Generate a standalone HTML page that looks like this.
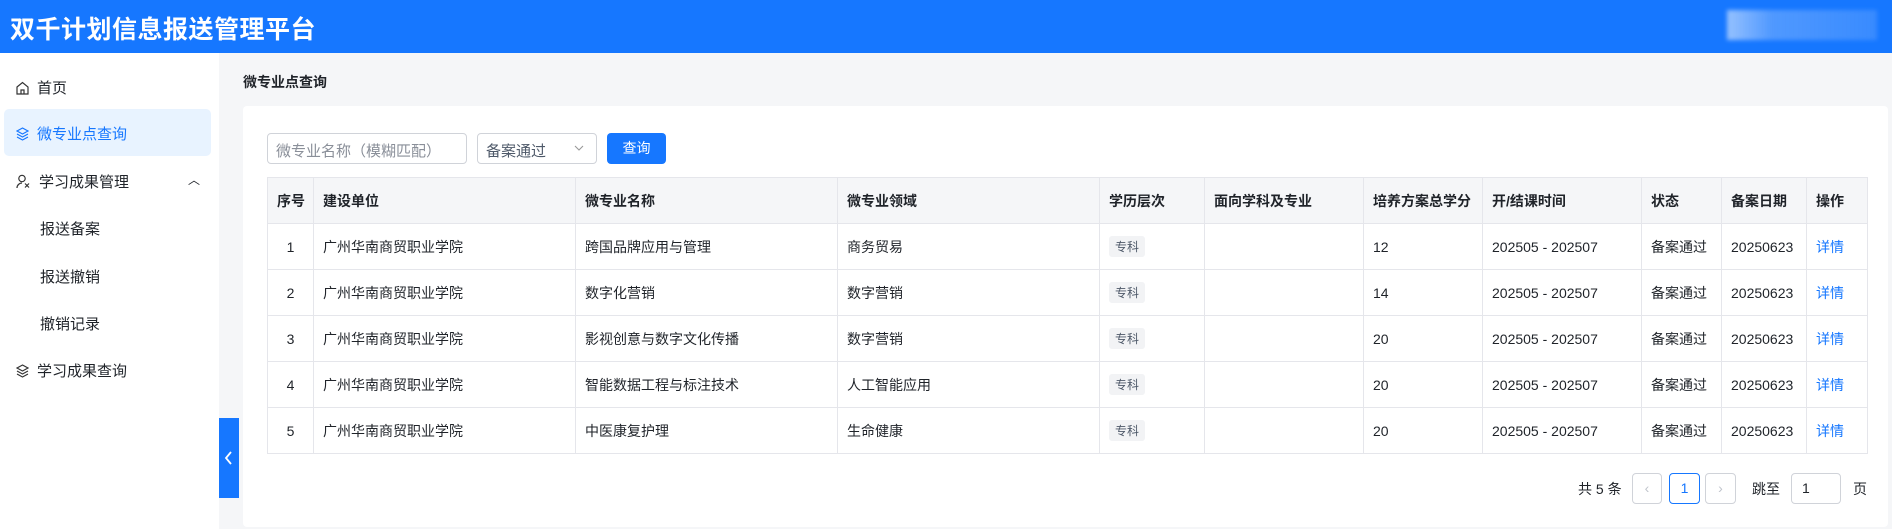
<!DOCTYPE html>
<html><head><meta charset="utf-8"><style>
*{box-sizing:border-box;margin:0;padding:0}
body{width:1892px;height:529px;overflow:hidden;background:#f5f6f8;font-family:"Liberation Sans","Noto Sans CJK SC",sans-serif;color:#1f2329;position:relative}
.hd{position:absolute;left:0;top:0;width:1892px;height:53px;background:#1677ff}
.hd h1{position:absolute;left:10px;top:10px;font-size:25px;color:#fff;font-weight:bold;letter-spacing:0.5px}
.blur{position:absolute;left:1727px;top:10px;width:150px;height:30px;background:linear-gradient(90deg,rgba(255,255,255,.55),rgba(255,255,255,.25) 30%,rgba(255,255,255,.15));filter:blur(2px)}
.sb{position:absolute;left:0;top:53px;width:219px;height:476px;background:#fff}
.mi{position:absolute;left:0;font-size:15px;color:#1f2329;display:flex;align-items:center}
.mi svg{margin-right:8px}
.act{position:absolute;left:4px;top:109px;width:207px;height:47px;background:#e8f3ff;border-radius:5px}
.col{position:absolute;left:219px;top:418px;width:20px;height:80px;background:#1677ff}
.bc{position:absolute;left:243px;top:72px;font-size:14px;font-weight:bold}
.card{position:absolute;left:243px;top:106px;width:1645px;height:421px;background:#fff;border-radius:4px}
.inp{position:absolute;top:133px;height:31px;border:1px solid #d0d3d9;border-radius:4px;font-size:15px;color:#8a8f99;padding:6px 8px}
.btn{position:absolute;left:607px;top:133px;width:59px;height:31px;background:#1677ff;border-radius:4px;color:#fff;font-size:14px;text-align:center;line-height:31px}
table{position:absolute;left:267px;top:177px;border-collapse:collapse;font-size:14px;table-layout:fixed;width:1600px}
td,th{border:1px solid #e5e6eb;height:46px;padding:0 9px;text-align:left;white-space:nowrap;overflow:hidden}
th{background:#f5f6f8;font-weight:bold;height:46px}
.c{text-align:center}
.tag{display:inline-block;background:#f2f3f5;color:#4e5969;font-size:12px;padding:2px 6px;border-radius:3px}
a{color:#1677ff;text-decoration:none}
.pg{position:absolute;top:473px;height:31px;border:1px solid #d0d3d9;border-radius:4px;font-size:14px;text-align:center;line-height:29px;color:#c0c4cc}
.pt{position:absolute;top:479px;font-size:14px}
</style></head><body>
<div class="hd"><h1>双千计划信息报送管理平台</h1><div class="blur"></div></div>
<div class="sb"></div>
<div class="act"></div>
<div class="mi" style="left:16px;top:77px"><svg width="13" height="14" viewBox="0 0 13 14" fill="none" stroke="#333" stroke-width="1.2"><path d="M1 6L6.5 1.5 12 6V13H1Z M5 13V9h3v4"/></svg>首页</div>
<div class="mi" style="left:16px;top:123px;color:#1677ff"><svg width="13" height="14" viewBox="0 0 13 14" fill="none" stroke="#1677ff" stroke-width="1.2"><path d="M6.5 1L12 4 6.5 7 1 4Z M1 7l5.5 3 5.5-3 M1 10l5.5 3 5.5-3"/></svg>微专业点查询</div>
<div class="mi" style="left:16px;top:171px"><svg width="15" height="15" viewBox="0 0 15 15" fill="none" stroke="#333" stroke-width="1.2"><circle cx="6" cy="4.5" r="3.2"/><path d="M1 14c0-3 2.5-5 5-5 M9 9.5l4 4 M13 9.5l-4 4"/></svg>学习成果管理</div>
<div class="mi" style="left:188px;top:171px;font-size:12px">︿</div>
<div class="mi" style="left:40px;top:218px">报送备案</div>
<div class="mi" style="left:40px;top:266px">报送撤销</div>
<div class="mi" style="left:40px;top:313px">撤销记录</div>
<div class="mi" style="left:16px;top:360px"><svg width="13" height="14" viewBox="0 0 13 14" fill="none" stroke="#333" stroke-width="1.2"><path d="M6.5 1L12 4 6.5 7 1 4Z M1 7l5.5 3 5.5-3 M1 10l5.5 3 5.5-3"/></svg>学习成果查询</div>
<div class="col"><svg width="20" height="80" viewBox="0 0 20 80"><path d="M12 34l-5 6 5 6" stroke="#fff" stroke-width="1.8" fill="none"/></svg></div>
<div class="bc">微专业点查询</div>
<div class="card"></div>
<div class="inp" style="left:267px;width:200px">微专业名称（模糊匹配）</div>
<div class="inp" style="left:477px;width:120px;color:#4e5969">备案通过<svg style="position:absolute;right:12px;top:11px" width="10" height="6" viewBox="0 0 10 6"><path d="M1 1l4 4 4-4" stroke="#999" stroke-width="1.1" fill="none"/></svg></div>
<div class="btn">查询</div>
<table>
<colgroup><col style="width:46px"><col style="width:262px"><col style="width:262px"><col style="width:262px"><col style="width:105px"><col style="width:159px"><col style="width:119px"><col style="width:159px"><col style="width:80px"><col style="width:85px"><col style="width:61px"></colgroup>
<tr><th>序号</th><th>建设单位</th><th>微专业名称</th><th>微专业领域</th><th>学历层次</th><th>面向学科及专业</th><th>培养方案总学分</th><th>开/结课时间</th><th>状态</th><th>备案日期</th><th>操作</th></tr>
<tr><td class="c">1</td><td>广州华南商贸职业学院</td><td>跨国品牌应用与管理</td><td>商务贸易</td><td><span class="tag">专科</span></td><td></td><td>12</td><td>202505 - 202507</td><td>备案通过</td><td>20250623</td><td><a>详情</a></td></tr>
<tr><td class="c">2</td><td>广州华南商贸职业学院</td><td>数字化营销</td><td>数字营销</td><td><span class="tag">专科</span></td><td></td><td>14</td><td>202505 - 202507</td><td>备案通过</td><td>20250623</td><td><a>详情</a></td></tr>
<tr><td class="c">3</td><td>广州华南商贸职业学院</td><td>影视创意与数字文化传播</td><td>数字营销</td><td><span class="tag">专科</span></td><td></td><td>20</td><td>202505 - 202507</td><td>备案通过</td><td>20250623</td><td><a>详情</a></td></tr>
<tr><td class="c">4</td><td>广州华南商贸职业学院</td><td>智能数据工程与标注技术</td><td>人工智能应用</td><td><span class="tag">专科</span></td><td></td><td>20</td><td>202505 - 202507</td><td>备案通过</td><td>20250623</td><td><a>详情</a></td></tr>
<tr><td class="c">5</td><td>广州华南商贸职业学院</td><td>中医康复护理</td><td>生命健康</td><td><span class="tag">专科</span></td><td></td><td>20</td><td>202505 - 202507</td><td>备案通过</td><td>20250623</td><td><a>详情</a></td></tr>
</table>
<div class="pt" style="left:1578px">共 5 条</div>
<div class="pg" style="left:1632px;width:30px">‹</div>
<div class="pg" style="left:1669px;width:31px;border-color:#1677ff;color:#1677ff">1</div>
<div class="pg" style="left:1705px;width:31px">›</div>
<div class="pt" style="left:1752px">跳至</div>
<div class="pg" style="left:1791px;width:50px;color:#1f2329;text-align:left;padding-left:10px">1</div>
<div class="pt" style="left:1853px">页</div>
</body></html>
